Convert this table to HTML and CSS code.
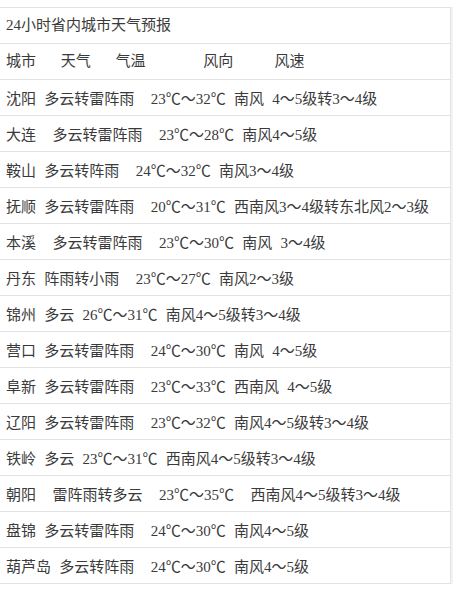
FILE: index.html
```html
<!DOCTYPE html>
<html lang="zh-CN">
<head>
<meta charset="utf-8">
<title>24小时省内城市天气预报</title>
<link rel="stylesheet" href="styles.css">
</head>
<body>
<div class="table">
<div class="row">24小时省内城市天气预报</div>
<div class="row">城市   天气   气温       风向     风速</div>
<div class="row">沈阳 多云转雷阵雨  23<span class="c">℃</span>～32<span class="c">℃</span> 南风 4～5级转3～4级</div>
<div class="row">大连  多云转雷阵雨  23<span class="c">℃</span>～28<span class="c">℃</span> 南风4～5级</div>
<div class="row">鞍山 多云转阵雨  24<span class="c">℃</span>～32<span class="c">℃</span> 南风3～4级</div>
<div class="row">抚顺 多云转雷阵雨  20<span class="c">℃</span>～31<span class="c">℃</span> 西南风3～4级转东北风2～3级</div>
<div class="row">本溪  多云转雷阵雨  23<span class="c">℃</span>～30<span class="c">℃</span> 南风 3～4级</div>
<div class="row">丹东 阵雨转小雨  23<span class="c">℃</span>～27<span class="c">℃</span> 南风2～3级</div>
<div class="row">锦州 多云 26<span class="c">℃</span>～31<span class="c">℃</span> 南风4～5级转3～4级</div>
<div class="row">营口 多云转雷阵雨  24<span class="c">℃</span>～30<span class="c">℃</span> 南风 4～5级</div>
<div class="row">阜新 多云转雷阵雨  23<span class="c">℃</span>～33<span class="c">℃</span> 西南风 4～5级</div>
<div class="row">辽阳 多云转雷阵雨  23<span class="c">℃</span>～32<span class="c">℃</span> 南风4～5级转3～4级</div>
<div class="row">铁岭 多云 23<span class="c">℃</span>～31<span class="c">℃</span> 西南风4～5级转3～4级</div>
<div class="row">朝阳  雷阵雨转多云  23<span class="c">℃</span>～35<span class="c">℃</span>  西南风4～5级转3～4级</div>
<div class="row">盘锦 多云转雷阵雨  24<span class="c">℃</span>～30<span class="c">℃</span> 南风4～5级</div>
<div class="row">葫芦岛 多云转阵雨  24<span class="c">℃</span>～30<span class="c">℃</span> 南风4～5级</div>
</div>
</body>
</html>
```
FILE: styles.css
```css
html, body {
  margin: 0;
  padding: 0;
  background: #ffffff;
}
body {
  padding-top: 7px;
}
.table {
  width: 450px;
  border-right: 1px solid #e2e2e2;
  border-bottom: 1px solid #e2e2e2;
  box-shadow: 2px 0 0 #f3f3f3;
  font-family: "Liberation Serif", "Noto Sans CJK SC", sans-serif;
  font-size: 15px;
  color: #3a3a3a;
}
.row {
  height: 35px;
  line-height: 35px;
  border-top: 1px solid #e2e2e2;
  padding-left: 6px;
  white-space: pre;
  word-spacing: 4.5px;
  overflow: hidden;
}
.c {
  font-family: "Noto Sans CJK SC", sans-serif;
}
```
